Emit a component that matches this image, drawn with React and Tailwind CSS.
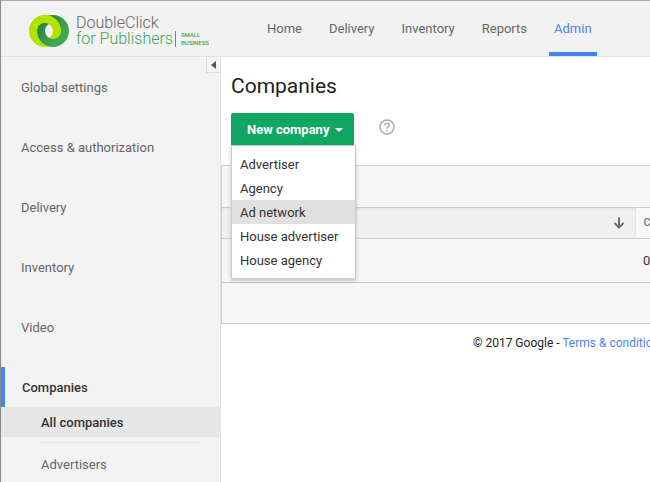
const NAV = ['Home', 'Delivery', 'Inventory', 'Reports', 'Admin'];
const SECTIONS = ['Global settings', 'Access & authorization', 'Delivery', 'Inventory', 'Video'];
const MENU = ['Advertiser', 'Agency', 'Ad network', 'House advertiser', 'House agency'];

function Logo() {
  return (
    <a href="#" className="flex items-center gap-[7px]">
      <svg width="40" height="32" viewBox="0 0 40 32" aria-hidden="true">
        <defs>
          <linearGradient id="shade" gradientUnits="userSpaceOnUse" x1="8" y1="10" x2="26" y2="26">
            <stop offset="0" stopColor="#2a7f3c" />
            <stop offset="1" stopColor="#43a652" />
          </linearGradient>
          <linearGradient id="fade" gradientUnits="userSpaceOnUse" x1="20" y1="14" x2="22" y2="22">
            <stop offset="0" stopColor="#b0e400" />
            <stop offset="1" stopColor="#b0e400" stopOpacity="0" />
          </linearGradient>
        </defs>
        <circle cx="16" cy="16" r="12" fill="none" stroke="#b0e400" strokeWidth="8" />
        <circle cx="24" cy="16" r="12" fill="none" stroke="url(#shade)" strokeWidth="8" />
        <path d="M0 16A16 16 0 1 1 29.8 24L22.9 20A8 8 0 1 0 8 16Z" fill="url(#fade)" />
      </svg>
      <span className="flex items-end gap-[2px] font-light text-[#43a35a]">
        <span className="flex flex-col text-[16px] leading-4">
          <span className="text-[#666]">DoubleClick</span>
          <span>for Publishers</span>
        </span>
        <span className="border-l border-[#43a35a] pl-[5px] text-[6px] leading-2 font-medium">
          SMALL
          <br />
          BUSINESS
        </span>
      </span>
    </a>
  );
}

function Header() {
  return (
    <header className="flex h-14 shrink-0 items-stretch border-b border-[#e0e0e0] bg-[#f2f2f2] pl-7">
      <div className="flex w-[233px] shrink-0 items-center pt-1">
        <Logo />
      </div>
      <nav className="flex gap-[17px] text-[13px] leading-5 text-[#666]">
        {NAV.map((item) => (
          <a
            key={item}
            href="#"
            aria-current={item === 'Admin' ? 'page' : undefined}
            className={
              item === 'Admin'
                ? 'border-b-4 border-[#4285f4] px-[5px] pt-[18px] text-[#4b85f5]'
                : 'px-[5px] pt-[18px]'
            }
          >
            {item}
          </a>
        ))}
      </nav>
    </header>
  );
}

function Sidebar() {
  return (
    <aside className="relative w-[220px] shrink-0 border-r border-[#e2e2e2] bg-[#f3f3f3] text-[13px] text-[#666]">
      <button
        type="button"
        aria-label="Collapse sidebar"
        className="absolute top-0 right-0 flex h-4 w-[14px] items-center justify-center border-b border-l border-[#ddd]"
      >
        <svg width="5" height="8" viewBox="0 0 5 8" aria-hidden="true">
          <path d="M5 0V8L0 4Z" fill="#555" />
        </svg>
      </button>
      <nav>
        {SECTIONS.map((s) => (
          <a key={s} href="#" className="flex h-[60px] items-center pt-[2px] pl-5">
            {s}
          </a>
        ))}
        <a
          href="#"
          className="mt-[10px] flex h-10 items-center border-l-4 border-[#4285f4] pt-[2px] pl-[17px] font-medium text-[#333]"
        >
          Companies
        </a>
        <a href="#" className="flex h-[30px] items-center bg-[#e7e7e7] pt-[2px] pl-10 font-medium text-[#333]">
          All companies
        </a>
        <hr className="mt-[5px] mr-5 ml-10 border-[#e4e4e4]" />
        <a href="#" className="mt-[6px] flex h-[30px] items-center pt-[2px] pl-10">
          Advertisers
        </a>
      </nav>
    </aside>
  );
}

function NewCompany() {
  return (
    <div className="relative w-[123px]">
      <button
        type="button"
        aria-expanded="true"
        className="flex h-8 w-full items-center gap-[6px] rounded-t-[2px] bg-[#0fa763] pt-[2px] pl-4 text-[13px] font-bold whitespace-nowrap text-white"
      >
        New company
        <svg width="8" height="4" viewBox="0 0 8 4" className="shrink-0" aria-hidden="true">
          <path d="M0 0H8L4 4Z" fill="#fff" />
        </svg>
      </button>
      <ul
        role="menu"
        className="absolute top-8 left-0 w-[125px] border border-[#ccc] bg-white pt-[6px] pb-[6px] text-[13px] leading-[22px] text-[#333] shadow-[0_2px_4px_rgba(0,0,0,0.2)]"
      >
        {MENU.map((m) => (
          <li key={m} role="none">
            <button
              type="button"
              role="menuitem"
              className={
                m === 'Ad network'
                  ? 'block w-full bg-[#e0e0e0] pt-[2px] pl-2 text-left whitespace-nowrap'
                  : 'block w-full pt-[2px] pl-2 text-left whitespace-nowrap'
              }
            >
              {m}
            </button>
          </li>
        ))}
      </ul>
    </div>
  );
}

function CompanyTable() {
  return (
    <div className="mt-5 border-l border-[#ccc]">
      <div className="h-[42px] border-t border-[#ccc] bg-[#f6f6f6]" />
      <table className="w-full table-fixed border-collapse text-left">
        <thead>
          <tr className="h-[31px] border-y border-[#ccc] bg-[#f0f0f0] shadow-[inset_0_2px_2px_rgba(0,0,0,0.04)]">
            <th className="p-0 pr-[10px]">
              <svg width="12" height="12" viewBox="0 0 12 12" className="ml-auto" aria-label="Sorted descending">
                <path d="M6 0.5V10M1.5 6L6 10.5L10.5 6" fill="none" stroke="#707070" strokeWidth="2" />
              </svg>
            </th>
            <th className="w-[15px] overflow-hidden border-l border-[#e3e3e3] bg-[#f8f8f8] p-0 pl-2 text-[11px] font-medium text-[#777]">
              C
            </th>
          </tr>
        </thead>
        <tbody>
          <tr className="h-11 border-b border-[#ccc] bg-[#f6f6f6]">
            <td className="p-0" />
            <td className="overflow-hidden p-0 pl-2 text-[13px] text-[#333]">0</td>
          </tr>
        </tbody>
      </table>
      <div className="h-[41px] border-b border-[#ccc] bg-[#f6f6f6]" />
    </div>
  );
}

export default function App() {
  return (
    <div className="flex min-h-screen flex-col overflow-hidden border-t border-l border-t-[#aaa] border-l-[#888] bg-white font-[Roboto,'Liberation_Sans',sans-serif]">
      <Header />
      <div className="flex grow">
        <Sidebar />
        <main className="min-w-0 grow overflow-hidden">
          <div className="pl-[10px]">
            <h1 className="pt-[15px] text-[21px] leading-7 text-[#212121]">Companies</h1>
            <div className="mt-[13px] flex items-start gap-[25px]">
              <NewCompany />
              <button type="button" aria-label="Help" className="mt-[6px]">
                <svg width="16" height="16" viewBox="0 0 16 16" fill="none" aria-hidden="true">
                  <circle cx="8" cy="8" r="7" stroke="#aaa" strokeWidth="1.5" />
                  <path d="M5.7 6.3C5.7 3.4 10.3 3.4 10.3 6.2C10.3 7.7 8 7.9 8 9.8" stroke="#aaa" strokeWidth="1.4" />
                  <path d="M8 11V12.5" stroke="#aaa" strokeWidth="1.5" />
                </svg>
              </button>
            </div>
          </div>
          <CompanyTable />
          <footer className="mt-[11px] pl-[252px] text-[12px] leading-4 whitespace-nowrap text-[#222]">
            © 2017 Google -{' '}
            <a href="#" className="text-[#4b85f5]">
              Terms &amp; conditions
            </a>
          </footer>
        </main>
      </div>
    </div>
  );
}
